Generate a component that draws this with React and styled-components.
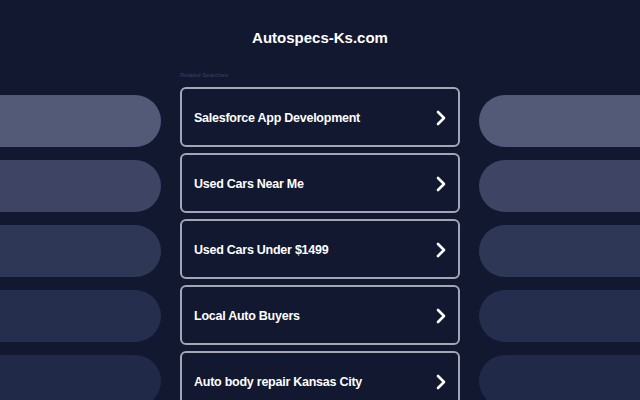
import React from 'react';
import styled, { createGlobalStyle } from 'styled-components';

const searches = [
	'Salesforce App Development',
	'Used Cars Near Me',
	'Used Cars Under $1499',
	'Local Auto Buyers',
	'Auto body repair Kansas City'
];

const pillColors = ['#525a78', '#3e4564', '#2f3757', '#262e4e', '#212949'];

const GlobalStyle = createGlobalStyle`
	html, body {
		margin: 0;
		padding: 0;
		background: #111830;
		overflow: hidden;
	}
	body {
		font-family: 'Liberation Sans', Arial, sans-serif;
	}
`;

const Page = styled.div`
	width: 640px;
	height: 400px;
	overflow: hidden;
	background: #111830;
`;

const Header = styled.h1`
	margin: 0;
	padding-top: 29px;
	height: 46px;
	box-sizing: border-box;
	text-align: center;
	font-size: 15px;
	line-height: 18px;
	font-weight: 700;
	color: #ffffff;
`;

const Columns = styled.div`
	display: grid;
	grid-template-columns: 161px 280px 162px;
	column-gap: 19px;
	margin-top: 25px;
`;

const PillColumn = styled.div`
	display: flex;
	flex-direction: column;
	gap: 13px;
	padding-top: 24px;
`;

const Pill = styled.div`
	height: 52px;
	background: ${(p) => p.$color};
	border-radius: ${(p) => (p.$side === 'left' ? '0 26px 26px 0' : '26px 0 0 26px')};
`;

const Center = styled.div`
	display: flex;
	flex-direction: column;
`;

const Label = styled.div`
	font-size: 6px;
	line-height: 8px;
	color: #3b4362;
	margin-bottom: 8px;
`;

const List = styled.div`
	display: flex;
	flex-direction: column;
	gap: 6px;
`;

const Card = styled.a`
	display: flex;
	align-items: center;
	justify-content: space-between;
	height: 60px;
	box-sizing: border-box;
	padding: 2px 11px 0 12px;
	border: 2px solid #a3a7b4;
	border-radius: 6px;
	color: #ffffff;
	text-decoration: none;
	font-size: 12.5px;
	letter-spacing: -0.25px;
	font-weight: 700;
`;

const Chevron = () => (
	<svg width="12" height="16" viewBox="0 0 12 16">
		<polyline
			points="3,2 9,8 3,14"
			fill="none"
			stroke="#ffffff"
			strokeWidth="2.6"
			strokeLinecap="round"
			strokeLinejoin="round"
		/>
	</svg>
);

export default function App() {
	return (
		<Page>
			<GlobalStyle />
			<Header>Autospecs-Ks.com</Header>
			<Columns>
				<PillColumn>
					{pillColors.map((c) => (
						<Pill key={c} $color={c} $side="left" />
					))}
				</PillColumn>
				<Center>
					<Label>Related Searches:</Label>
					<List>
						{searches.map((s) => (
							<Card key={s} href="#">
								{s}
								<Chevron />
							</Card>
						))}
					</List>
				</Center>
				<PillColumn>
					{pillColors.map((c) => (
						<Pill key={c} $color={c} $side="right" />
					))}
				</PillColumn>
			</Columns>
		</Page>
	);
}
